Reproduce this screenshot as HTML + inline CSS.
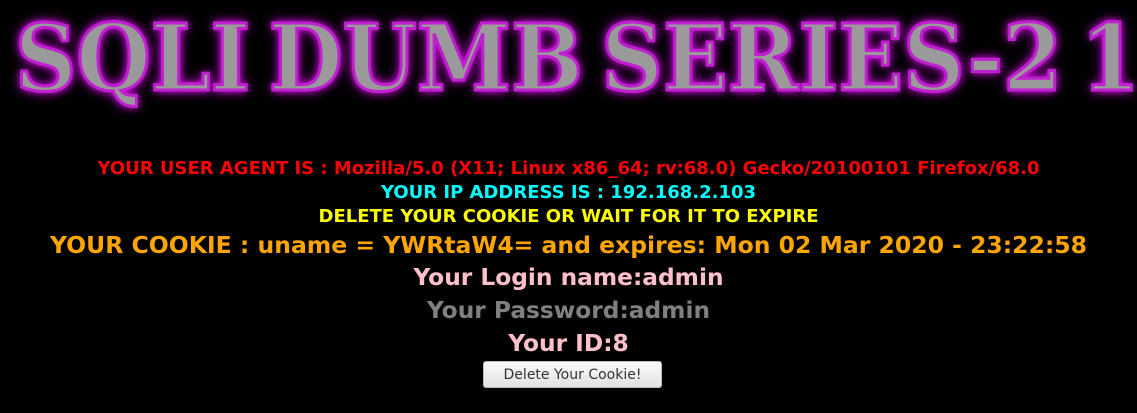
<!DOCTYPE html>
<html><head><meta charset="utf-8"><style>
html,body{margin:0;background:#000;width:1137px;height:413px;overflow:hidden;font-family:"DejaVu Sans","Liberation Sans",sans-serif;font-weight:bold;}
.wrap{position:absolute;left:0;top:0;width:1137px;height:130px;overflow:hidden;}
.title{position:absolute;left:15px;top:6px;white-space:nowrap;font-family:"DejaVu Serif","Liberation Serif",serif;font-weight:900;font-size:92px;line-height:104px;color:#9a9a9a;transform-origin:0 0;transform:scaleX(0.925);word-spacing:-12px;
text-shadow:0 0 2px #fff,0 0 6px #d020e0,0 0 10px #c000d0,0 0 14px #a000b0;-webkit-text-stroke:3px #c020d0;}
.l{position:absolute;left:0;width:1137px;text-align:center;white-space:nowrap;}
button{position:absolute;left:483px;top:361px;width:179px;height:27px;border:1px solid #bbb;border-radius:3px;background:linear-gradient(#fafafa,#e2e2e2);font-family:"DejaVu Sans",sans-serif;font-size:14px;color:#333;padding:0;}
</style></head><body>
<div class="wrap"><div class="title">SQLI DUMB SERIES-2 1</div></div>
<div class="l" style="top:158px;font-size:18px;color:#f00;">YOUR USER AGENT IS : Mozilla/5.0 (X11; Linux x86_64; rv:68.0) Gecko/20100101 Firefox/68.0</div>
<div class="l" style="top:182px;font-size:18px;color:#0ff;">YOUR IP ADDRESS IS : 192.168.2.103</div>
<div class="l" style="top:206px;font-size:18px;color:#ff0;">DELETE YOUR COOKIE OR WAIT FOR IT TO EXPIRE</div>
<div class="l" style="top:231px;font-size:23.5px;color:#ffa500;">YOUR COOKIE : uname = YWRtaW4= and expires: Mon 02 Mar 2020 - 23:22:58</div>
<div class="l" style="top:264px;font-size:23.3px;color:#ffc0cb;">Your Login name:admin</div>
<div class="l" style="top:297px;font-size:23.3px;color:#808080;">Your Password:admin</div>
<div class="l" style="top:330px;font-size:23.3px;color:#ffc0cb;">Your ID:8</div>
<button>Delete Your Cookie!</button>
</body></html>
